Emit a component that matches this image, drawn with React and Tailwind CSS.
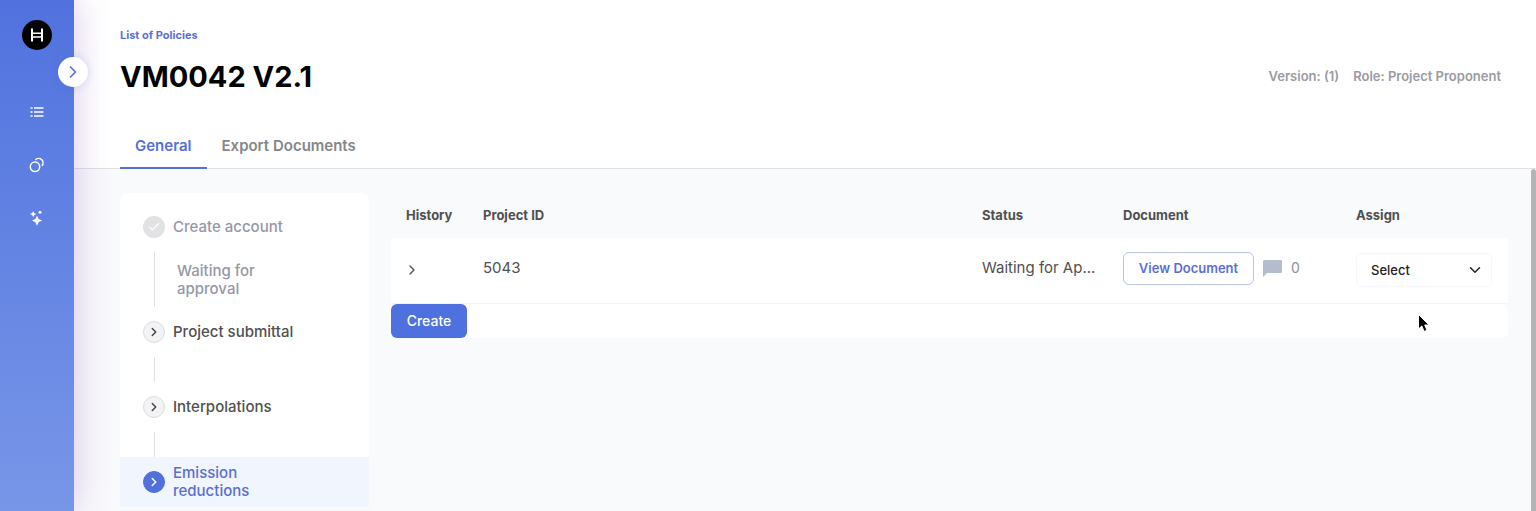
import React from 'react'
import { Check, ChevronDown, ChevronRight } from 'lucide-react'

const steps = [
  { id: 'account', label: 'Create account', state: 'done', note: 'Waiting for approval' },
  { id: 'submittal', label: 'Project submittal', state: 'open' },
  { id: 'interpolations', label: 'Interpolations', state: 'open' },
  { id: 'emission', label: 'Emission reductions', state: 'active' },
]

const rows = [{ id: '5043', status: 'Waiting for Ap...', comments: 0 }]

export default function App() {
  return (
    <div className="relative flex h-screen overflow-hidden bg-white font-['Inter',sans-serif] text-[#505050]">
      <Sidebar />
      <div className="flex min-w-0 flex-1 flex-col">
        <Header />
        <div className="flex min-h-0 flex-1">
          <main className="flex min-w-0 flex-1 items-start gap-[22px] bg-[#f9fafc] pt-6 pr-[23px] pl-[46px]">
            <Steps />
            <Documents />
          </main>
          <div className="w-[5px] shrink-0 rounded-t bg-[#b4b4b4]" />
        </div>
      </div>
      <Pointer />
    </div>
  )
}

function Sidebar() {
  return (
    <aside className="relative z-10 flex w-[74px] shrink-0 flex-col items-center bg-linear-to-b from-[#5172de] to-[#7896e8] pt-5 shadow-[0_0_36px_rgba(130,70,180,0.3)]">
      <a href="#" aria-label="Home">
        <svg className="size-[30px]" viewBox="0 0 30 30" fill="none">
          <circle cx="15" cy="15" r="15" fill="#000" />
          <path d="M10 8.500v13M20 8.500v13" stroke="#fff" strokeWidth="2" />
          <path d="M10 13.300h10M10 17h10" stroke="#fff" strokeWidth="1.500" />
        </svg>
      </a>
      <button
        type="button"
        aria-label="Expand menu"
        className="absolute top-[57px] -right-[14px] flex size-[30px] items-center justify-center rounded-full bg-white text-[#5a6fd0] shadow-[0_0_10px_rgba(90,80,200,0.2)]"
      >
        <ChevronRight className="size-5" />
      </button>
      <nav className="mt-[54px] flex flex-col gap-[37px] text-white">
        <a href="#" aria-label="Policies">
          <svg className="size-4" viewBox="0 0 16 16" fill="none" stroke="currentColor" strokeWidth="1.6">
            <path d="M1.500 4h2M1.500 8h2M1.500 12h2M5 4h9.500M5 8h9.500M5 12h9.500" />
          </svg>
        </a>
        <a href="#" aria-label="Tokens">
          <svg className="size-4" viewBox="0 0 16 16" fill="none" stroke="currentColor" strokeWidth="1.5">
            <circle cx="6" cy="9.800" r="4.700" />
            <path d="M6.300 2.900A4.400 4.400 0 1 1 12.900 8.800" />
          </svg>
        </a>
        <a href="#" aria-label="AI search">
          <svg className="size-4" viewBox="0 0 16 16" fill="currentColor">
            <path d="M8 5.500 9.600 9 13 10.600 9.600 12.200 8 15.700 6.400 12.200 3 10.600 6.400 9z" />
            <path d="M4.200 0.900 5.200 3.100 7.400 4.100 5.200 5.100 4.200 7.300 3.200 5.100 1 4.100 3.200 3.100z" />
            <circle cx="11" cy="2.200" r="1.500" />
          </svg>
        </a>
      </nav>
    </aside>
  )
}

function Header() {
  return (
    <header className="border-b border-[#dfe1e6] pt-[27px] pr-[35px] pl-[46px]">
      <a href="#" className="block w-fit text-[11px] leading-4 font-bold text-[#5a71d6]">List of Policies</a>
      <div className="mt-3 flex items-center justify-between">
        <h1 className="text-[29px] leading-[44px] font-bold text-black">VM0042 V2.1</h1>
        <div className="flex gap-[14px] text-[13px] font-semibold text-[#9a9ba3]">
          <span>Version: (1)</span>
          <span>Role: Project Proponent</span>
        </div>
      </div>
      <nav className="-mb-px mt-[25px] flex text-[15px] leading-[22px] font-semibold">
        <a href="#" className={tabCls(true)}>General</a>
        <a href="#" className={tabCls(false)}>Export Documents</a>
      </nav>
    </header>
  )
}

function Steps() {
  return (
    <ol className="w-[249px] shrink-0 rounded-lg bg-white pt-[9px] text-[15px] leading-[18px] font-medium">
      {steps.map((step, i) => (
        <li key={step.id}>
          <a href="#" className={stepCls(step.state)}>
            <StepIcon state={step.state} />
            <span className="w-32">{step.label}</span>
          </a>
          {step.note ? (
            <div className="ml-[34px] flex h-[55px] items-center border-l border-[#e1e2e7] pl-[22px] text-[#9698a6]">
              <span className="w-24">{step.note}</span>
            </div>
          ) : i < steps.length - 1 && <div className="ml-[34px] h-[25px] border-l border-[#dfe1ea]" />}
        </li>
      ))}
    </ol>
  )
}

function StepIcon({ state }) {
  if (state === 'done') {
    return (
      <span className="flex size-[22px] shrink-0 items-center justify-center rounded-full bg-[#e2e2e4] text-white">
        <Check className="size-[14px]" />
      </span>
    )
  }
  return (
    <span className={iconCls(state === 'active')}>
      <ChevronRight className="size-[14px]" strokeWidth={2.5} />
    </span>
  )
}

function Documents() {
  return (
    <section className="min-w-0 flex-1">
      <table className="w-full table-fixed text-left">
        <thead>
          <tr className="h-[45px] text-[13px] font-semibold">
            <th className="w-[77px] pl-[15px]">History</th>
            <th className="pl-[15px]">Project ID</th>
            <th className="w-[141px] pl-[15px]">Status</th>
            <th className="w-[233px] pl-[15px]">Document</th>
            <th className="w-[167px] pl-[15px]">Assign</th>
          </tr>
        </thead>
        <tbody>
          {rows.map((row) => (
            <tr key={row.id} className="h-[65px] border-b border-[#f3f4f6] bg-white text-[15px]">
              <td className="pl-[13px]">
                <button type="button" aria-label="Show history" className="block">
                  <ChevronRight className="size-4" />
                </button>
              </td>
              <td className="pb-1 pl-[15px]">{row.id}</td>
              <td className="pb-1 pl-[15px] whitespace-nowrap">{row.status}</td>
              <td className="pb-1 pl-[15px]">
                <div className="flex items-center">
                  <button type="button" className="h-[33px] w-[131px] rounded-md border border-[#b9c5e3] text-[13px] font-semibold whitespace-nowrap text-[#5a6fd4]">
                    View Document
                  </button>
                  <svg className="ml-[9px] h-[18px] w-[19px] text-[#b4bccd]" viewBox="0 0 19 18" fill="currentColor">
                    <path d="M1.500 1h16a1.500 1.500 0 0 1 1.500 1.500v10a1.500 1.500 0 0 1-1.500 1.500H4L0 18V2.500A1.500 1.500 0 0 1 1.500 1z" />
                  </svg>
                  <span className="ml-[9px] text-sm text-[#8e929e]">{row.comments}</span>
                </div>
              </td>
              <td className="pr-4 pl-[15px]">
                <div className="relative">
                  <select aria-label="Assign" className="h-[34px] w-full appearance-none rounded-md border border-[#f7f7f9] bg-white pl-[14px] text-[13px] font-medium text-[#222]">
                    <option>Select</option>
                  </select>
                  <ChevronDown className="pointer-events-none absolute top-2 right-2 size-[18px] text-[#222]" />
                </div>
              </td>
            </tr>
          ))}
        </tbody>
      </table>
      <div className="rounded-md bg-white">
        <button type="button" className="block h-[34px] w-[76px] rounded-md bg-[#4f70df] text-sm font-medium text-white">Create</button>
      </div>
    </section>
  )
}

function Pointer() {
  return (
    <svg className="pointer-events-none absolute top-[313px] right-[105px] z-20 h-5 w-[14px]" viewBox="0 0 14 20">
      <path d="M1.500 1.500V16L4.800 13 7.200 18.500 10 17.300 7.700 12H12z" fill="#000" stroke="#fff" strokeWidth="1" />
    </svg>
  )
}

function tabCls(active) {
  return `border-b-2 px-[15px] pt-[11px] pb-[10px] ${active ? 'border-[#5470dc] text-[#5470dc]' : 'border-transparent text-[#85868a]'}`
}
function stepCls(state) {
  const base = 'flex h-[50px] items-center gap-2 pl-[23px]'
  if (state === 'active') return `${base} bg-[#f0f5fe] text-[#5a6fd0]`
  return `${base} ${state === 'done' ? 'text-[#9698a6]' : 'text-[#505050]'}`
}
function iconCls(active) {
  return `flex size-[22px] shrink-0 items-center justify-center rounded-full border ${active ? 'border-[#5270dc] bg-[#5270dc] text-white' : 'border-[#dcdde1] bg-[#f3f3f5] text-[#444]'}`
}
